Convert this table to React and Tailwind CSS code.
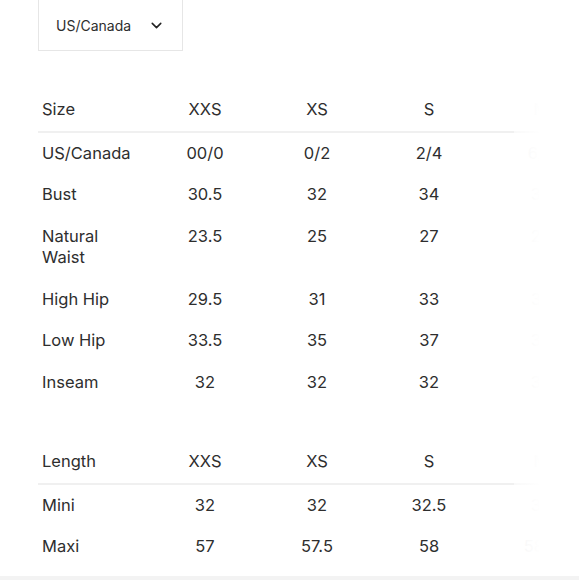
import { ChevronDown } from 'lucide-react';

const cols = ['XXS', 'XS', 'S', 'M'];

const bodyRows = [
  { label: 'US/Canada', values: ['00/0', '0/2', '2/4', '6/8'] },
  { label: 'Bust', values: ['30.5', '32', '34', '36'] },
  { label: 'Natural Waist', values: ['23.5', '25', '27', '29'] },
  { label: 'High Hip', values: ['29.5', '31', '33', '35'] },
  { label: 'Low Hip', values: ['33.5', '35', '37', '39'] },
  { label: 'Inseam', values: ['32', '32', '32', '32'] },
];

const lengthRows = [
  { label: 'Mini', values: ['32', '32', '32.5', '33'] },
  { label: 'Maxi', values: ['57', '57.5', '58', '58.5'] },
];

const Row = ({ label, values, header }) => (
  <div className={`flex ${header ? 'border-b-2 border-[#f0f0f0]' : ''}`}>
    <div className="w-[111px] shrink-0 pl-[4px] pr-2 py-[10px] leading-[21.5px]">{label}</div>
    {values.map((v, i) => (
      <div key={i} className={`w-[112px] shrink-0 text-center py-[10px] leading-[21.5px] ${i === 3 ? 'text-[#e4e4e4]' : ''}`}>{v}</div>
    ))}
  </div>
);

const SizeTable = ({ title, rows }) => (
  <div className="relative w-[502px] overflow-hidden">
    <Row label={title} values={cols} header />
    {rows.map((r) => (
      <Row key={r.label} label={r.label} values={r.values} />
    ))}
    <div className="absolute right-0 top-0 bottom-0 w-[26px] bg-gradient-to-r from-white/60 to-white" />
  </div>
);

const App = () => {
  return (
    <div className="w-[579px] h-[580px] bg-white text-[#2e2e2e] overflow-hidden flex flex-col" style={{ fontFamily: 'Inter, "Liberation Sans", sans-serif' }}>
      <div className="pl-[38px]">
        <div className="w-[145px] h-[51px] border border-t-0 border-[#e6e6e6] flex items-center pl-[17px] pr-[17px] justify-between text-[14px]">
          <span>US/Canada</span>
          <ChevronDown size={17} strokeWidth={2.2} className="text-[#222]" />
        </div>
      </div>
      <div className="pl-[38px] pt-[38px] text-[16.5px]">
        <SizeTable title="Size" rows={bodyRows} />
        <div className="h-[38px]" />
        <SizeTable title="Length" rows={lengthRows} />
      </div>
      <div className="mt-auto h-[4px] bg-[#f3f3f3]" />
    </div>
  );
};

export default App;
